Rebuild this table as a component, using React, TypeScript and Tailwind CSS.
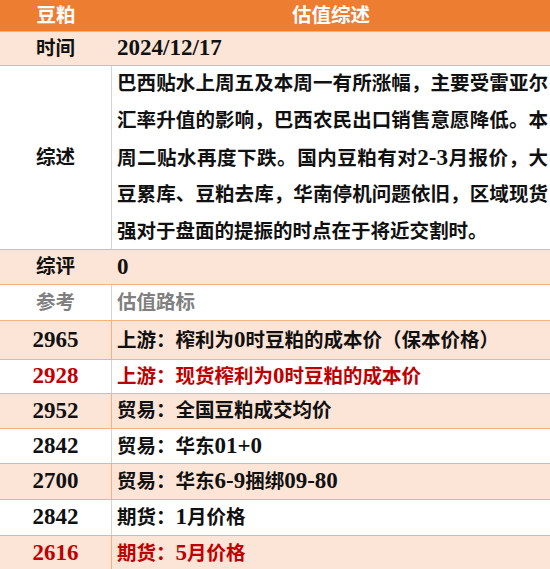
import React from "react";

const FONT = { fontFamily: '"Liberation Serif", "Noto Sans CJK SC", serif' };

function T({ s }: { s: string }) {
  const parts = s.split(/([0-9+\-/]+)/);
  return (
    <>
      {parts.map((p, i) =>
        /^[0-9+\-/]+$/.test(p) ? (
          <span key={i} className="text-[23px]">{p}</span>
        ) : (
          <React.Fragment key={i}>{p}</React.Fragment>
        )
      )}
    </>
  );
}

type RowProps = {
  h: string;
  peach: boolean;
  left: string;
  right: string;
  color?: string;
  divider?: boolean;
};

function Row({ h, peach, left, right, color = "text-[#111]", divider = true }: RowProps) {
  const bg = peach ? "bg-[#FCE4D6]" : "bg-white";
  const div = !divider ? "border-r-transparent" : peach ? "border-r-[#F4B183]" : "border-r-[#D4D4D4]";
  return (
    <div className={`flex ${h} ${bg} ${color} border-b border-[#F4B183]`}>
      <div className={`w-[112px] shrink-0 flex items-center justify-center border-r ${div}`}>
        <T s={left} />
      </div>
      <div className="flex-1 flex items-center pl-[5px] whitespace-nowrap">
        <span><T s={right} /></span>
      </div>
    </div>
  );
}

export default function App() {
  const lines = [
    "巴西贴水上周五及本周一有所涨幅，主要受雷亚尔",
    "汇率升值的影响，巴西农民出口销售意愿降低。本",
    "周二贴水再度下跌。国内豆粕有对2-3月报价，大",
    "豆累库、豆粕去库，华南停机问题依旧，区域现货",
  ];
  return (
    <div className="w-[550px] h-[569px] overflow-hidden bg-white font-bold text-[19.5px]" style={FONT}>
      <div className="flex h-[32px] bg-[#ED7D31] text-white border-b border-[#F4B183]">
        <div className="w-[112px] shrink-0 flex items-center justify-center">豆粕</div>
        <div className="flex-1 flex items-center justify-center">估值综述</div>
      </div>
      <Row h="h-[34px]" peach left="时间" right="2024/12/17" divider={false} />
      <div className="flex h-[184px] bg-white text-[#111] border-b border-[#F4B183]">
        <div className="w-[112px] shrink-0 flex items-center justify-center border-r border-r-[#D4D4D4]">综述</div>
        <div className="flex-1 pl-[5px] pr-[2px] flex flex-col justify-center leading-[37px]">
          {lines.map((l, i) => (
            <div key={i} className="h-[37px] text-justify [text-align-last:justify] whitespace-nowrap">
              <T s={l} />
            </div>
          ))}
          <div className="h-[37px]">强对于盘面的提振的时点在于将近交割时。</div>
        </div>
      </div>
      <Row h="h-[35px]" peach left="综评" right="0" divider={false} />
      <Row h="h-[36px]" peach={false} left="参考" right="估值路标" color="text-[#808080]" />
      <Row h="h-[39px]" peach left="2965" right="上游：榨利为0时豆粕的成本价（保本价格）" />
      <Row h="h-[34px]" peach={false} left="2928" right="上游：现货榨利为0时豆粕的成本价" color="text-[#C00000]" />
      <Row h="h-[35px]" peach left="2952" right="贸易：全国豆粕成交均价" />
      <Row h="h-[35px]" peach={false} left="2842" right="贸易：华东01+0" />
      <Row h="h-[36px]" peach left="2700" right="贸易：华东6-9捆绑09-80" />
      <Row h="h-[36px]" peach={false} left="2842" right="期货：1月价格" />
      <Row h="h-[36px]" peach left="2616" right="期货：5月价格" color="text-[#C00000]" />
    </div>
  );
}
